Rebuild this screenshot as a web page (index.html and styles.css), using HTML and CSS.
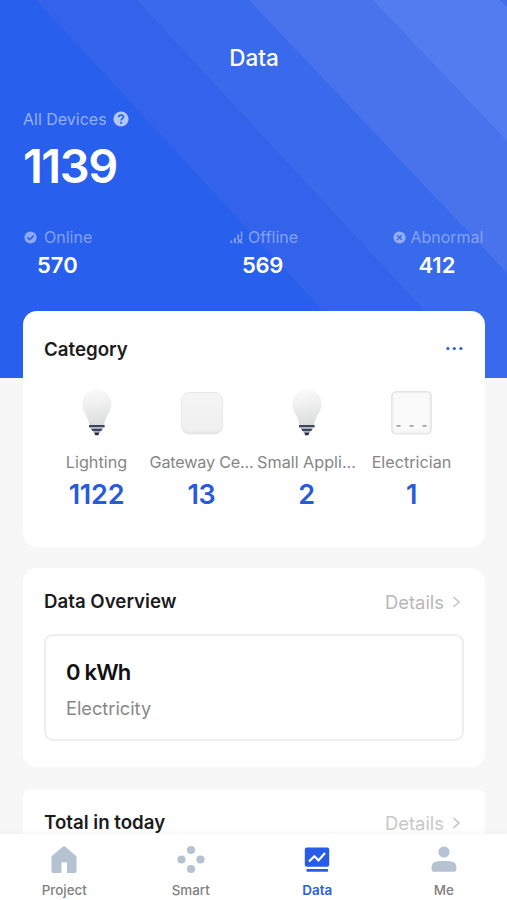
FILE: index.html
```html
<!DOCTYPE html>
<html lang="en">
<head>
<meta charset="utf-8">
<meta name="viewport" content="width=device-width, initial-scale=1">
<title>Data</title>
<link rel="stylesheet" href="styles.css">
</head>
<body>
<svg class="defs" width="0" height="0" aria-hidden="true">
  <defs>
    <linearGradient id="glass" x1="0" y1="0" x2="0.15" y2="1"><stop offset="0" stop-color="#fbfbfb"/><stop offset="0.45" stop-color="#f0f0f0"/><stop offset="1" stop-color="#dcdddd"/></linearGradient>
    <linearGradient id="plate" x1="0" y1="0" x2="0" y2="1"><stop offset="0" stop-color="#f5f5f5"/><stop offset="0.85" stop-color="#f0f0f0"/><stop offset="1" stop-color="#e4e4e4"/></linearGradient>
    <linearGradient id="face" x1="0" y1="0" x2="0" y2="1"><stop offset="0" stop-color="#f4f4f4"/><stop offset="1" stop-color="#f0f0f0"/></linearGradient>
    <symbol id="bulb" viewBox="0 0 48 52">
      <path d="M23.800 2.500C15 2.500 9.200 8.800 9.200 17c0 8.800 6.700 12.300 7.200 21.500h14.800c.5-9.200 7.200-12.700 7.200-21.500C38.400 8.800 32.600 2.500 23.800 2.500z" fill="url(#glass)"/>
      <path d="M16 38h15.600v2.400H16z" fill="#3c455b"/>
      <path d="M17.500 40.400h12.600v1.400H17.500z" fill="#b4bccb"/>
      <path d="M18.200 41.800h11.200l-1 2.200h-9.200z" fill="#3c455b"/>
      <path d="M20.200 44h7.200v1.500h-7.200z" fill="#aab3c4"/>
      <path d="M21.200 45.500h5.200l-1 2.700h-3.200z" fill="#242d41"/>
    </symbol>
  </defs>
</svg>
<div class="app">
  <main class="content">
    <header class="hero">
      <svg class="rays" viewBox="0 0 507 378" preserveAspectRatio="none" aria-hidden="true">
        <path d="M36 0H507V378H385z" fill="#3263ea"/>
        <path d="M137 0H507V378H487z" fill="#3a6aec"/>
        <path d="M249 0H507V273z" fill="#4972ed"/>
        <path d="M373 0H507V141z" fill="#537cf1"/>
        <path d="M500 0H507V7z" fill="#406fe9"/>
      </svg>
      <h1 class="title">Data</h1>
      <div class="all">All Devices
        <svg width="16" height="16" viewBox="0 0 16 16"><circle cx="8" cy="8" r="7.600" fill="#b2c7fb"/><path d="M5.700 6.300C5.700 3.300 10.400 3.300 10.400 6c0 1.700-2.300 1.700-2.300 3.500" fill="none" stroke="#2b61e9" stroke-width="1.700"/><circle cx="8.100" cy="11.800" r="1.100" fill="#2b61e9"/></svg>
      </div>
      <div class="total">1139</div>
      <div class="stats">
        <div class="stat online">
          <div class="stat-label"><svg width="13" height="13" viewBox="0 0 13 13"><circle cx="6.500" cy="6.500" r="6.100" fill="#8caaf7"/><path d="M3.500 6.400l2.200 2.200 4-4" fill="none" stroke="#2960ec" stroke-width="1.500"/></svg><span>Online</span></div>
          <div class="stat-num">570</div>
        </div>
        <div class="stat offline">
          <div class="stat-label"><svg width="13" height="13" viewBox="0 0 13 13"><path d="M.5 9.500h1.800V12H.5zM4 7h1.800v5H4zM7.300 3.500h1.800V7H7.300zM10.800.5h1.500v6h-1.500z" fill="#86a4f5"/><path d="M7.400 7.600l4.800 4.600M12.200 7.600l-4.800 4.600" stroke="#86a4f5" stroke-width="1.500"/></svg><span>Offline</span></div>
          <div class="stat-num">569</div>
        </div>
        <div class="stat abnormal">
          <div class="stat-label"><svg width="13" height="13" viewBox="0 0 13 13"><circle cx="6.500" cy="6.500" r="6.100" fill="#91adf6"/><path d="M4.200 4.200l4.600 4.600M8.800 4.200L4.200 8.800" stroke="#3a6aec" stroke-width="1.400"/></svg><span>Abnormal</span></div>
          <div class="stat-num">412</div>
        </div>
      </div>
    </header>

    <section class="card category">
      <div class="card-head">
        <h2>Category</h2>
        <svg width="18" height="6" viewBox="0 0 18 6"><g fill="#2b5fe0"><circle cx="1.900" cy="2.500" r="1.600"/><circle cx="8.300" cy="2.500" r="1.600"/><circle cx="14.900" cy="2.500" r="1.600"/></g></svg>
      </div>
      <div class="grid">
        <div class="item"><svg width="48" height="52"><use href="#bulb"/></svg><div class="name">Lighting</div><div class="num">1122</div></div>
        <div class="item"><svg width="48" height="52" viewBox="0 0 48 52"><rect x="3.500" y="5.500" width="41" height="41.500" rx="8" fill="url(#plate)" stroke="#e8e8e8"/><rect x="5.500" y="6.500" width="37" height="38" rx="7" fill="url(#face)"/></svg><div class="name tight">Gateway Ce...</div><div class="num">13</div></div>
        <div class="item"><svg width="48" height="52"><use href="#bulb"/></svg><div class="name">Small Appli...</div><div class="num">2</div></div>
        <div class="item"><svg width="48" height="52" viewBox="0 0 48 52"><rect x="3.900" y="4.800" width="39.200" height="42" rx="4" fill="#f7f7f7" stroke="#e5e5e5" stroke-width="1.600"/><rect x="6.500" y="6.500" width="34" height="36" rx="3" fill="#fafafa"/><path d="M8.500 38.800h4M21.500 38.800h4M34.500 38.800h4" stroke="#a3a3a3" stroke-width="1.700"/></svg><div class="name">Electrician</div><div class="num">1</div></div>
      </div>
    </section>

    <section class="card overview">
      <div class="card-head">
        <h2>Data Overview</h2>
        <a class="details">Details<svg width="9" height="12" viewBox="0 0 9 12"><path d="M1.500 1l5.500 5-5.500 5" fill="none" stroke="#c3c3c3" stroke-width="1.500"/></svg></a>
      </div>
      <div class="metric">
        <div class="value">0 kWh</div>
        <div class="label">Electricity</div>
      </div>
    </section>

    <section class="card today">
      <div class="card-head">
        <h2>Total in today</h2>
        <a class="details faint">Details<svg width="9" height="12" viewBox="0 0 9 12"><path d="M1.500 1l5.500 5-5.500 5" fill="none" stroke="#c3c3c3" stroke-width="1.500"/></svg></a>
      </div>
    </section>
  </main>

  <nav class="tabs">
    <div class="tab"><svg width="30" height="30" viewBox="0 0 30 30"><path d="M13.700 1.800Q15 .7 16.300 1.800L26.500 10.500Q27.500 11.400 27.500 12.700V26Q27.500 28 25.500 28H18V18.500Q18 17.300 16.800 17.300H13.700Q12.500 17.300 12.500 18.500V28H4.500Q2.500 28 2.500 26V12.700Q2.500 11.400 3.500 10.500z" fill="#b5c2d1"/></svg><span>Project</span></div>
    <div class="tab"><svg width="30" height="30" viewBox="0 0 30 30"><g fill="#b5c2d1"><circle cx="15" cy="5" r="4.100"/><circle cx="5.500" cy="14.500" r="4.100"/><circle cx="24.500" cy="14.500" r="4.100"/><circle cx="15" cy="24" r="4.100"/></g></svg><span>Smart</span></div>
    <div class="tab active"><svg width="30" height="30" viewBox="0 0 30 30"><rect x="2.800" y="2.500" width="24.400" height="19.200" rx="2" fill="#265ce8"/><path d="M7 16.500l5.300-5.300 4.200 4.200L23 8" fill="none" stroke="#fff" stroke-width="2.200"/><rect x="4.500" y="24" width="21.500" height="2.700" rx=".6" fill="#265ce8"/></svg><span>Data</span></div>
    <div class="tab"><svg width="30" height="30" viewBox="0 0 30 30"><g fill="#b5c2d1"><circle cx="15" cy="7" r="5.600"/><path d="M2.600 22.500C2.600 16.500 7 16 15 16s12.400.5 12.400 6.500v2q0 2.200-2.200 2.200H4.800q-2.200 0-2.200-2.200z"/></g></svg><span>Me</span></div>
  </nav>
</div>
</body>
</html>
```
FILE: styles.css
```css
* { box-sizing: border-box; }
body { margin: 0; background: #f7f7f7; font-family: Inter, "Liberation Sans", sans-serif; }
.defs { position: absolute; }
.app { display: flex; flex-direction: column; width: 507px; height: 900px; overflow: hidden; background: #f7f7f7; }
.content { flex: 1; min-height: 0; overflow: hidden; }
svg { display: block; flex: none; }
h1, h2 { margin: 0; }

.hero { position: relative; height: 378px; padding: 42px 22px 0 23px; background: #285fec; color: #fff; }
.rays { position: absolute; top: 0; left: 0; width: 507px; height: 378px; }
.hero > :not(.rays) { position: relative; }
.title { font-size: 22.500px; line-height: 32px; font-weight: 500; text-align: center; }
.all { display: flex; align-items: center; gap: 6px; margin-top: 35px; height: 20px; font-size: 16px; line-height: 20px; color: #94b0f8; }
.total { margin-top: 12px; font-size: 47px; line-height: 50px; font-weight: 600; letter-spacing: -1.500px; }
.stats { display: flex; margin-top: 36px; padding-left: 1px; }
.stat { width: 207px; }
.stat.offline { width: 164px; }
.stat.abnormal { width: 92px; }
.stat-label { display: flex; align-items: center; gap: 4px; height: 20px; font-size: 16px; color: #84a2f5; white-space: nowrap; }
.online .stat-label { gap: 7px; }
.offline .stat-label { gap: 5px; }
.stat-num { margin-top: 6px; padding-left: 13px; font-size: 22px; line-height: 24px; font-weight: 600; }
.offline .stat-num { padding-left: 12px; letter-spacing: -.4px; }
.abnormal .stat-num { padding-left: 25px; }

.card { position: relative; margin: 21px 22px 0 23px; padding: 0 21px; border-radius: 14px; background: #fff; }
.card-head { display: flex; align-items: center; justify-content: space-between; height: 24px; }
h2 { font-size: 18.700px; line-height: 24px; font-weight: 600; color: #1c1c1e; }
.category { margin-top: -67px; height: 236px; padding-top: 26px; }
.category h2 { padding-top: 1px; }
.grid { display: grid; grid-template-columns: repeat(4, 105px); margin-top: 26px; }
.item { display: flex; flex-direction: column; align-items: center; }
.name { margin-top: 13px; font-size: 16.200px; line-height: 20px; color: #868686; white-space: nowrap; }
.name.tight { letter-spacing: -.2px; }
.num { margin-top: 10px; font-size: 27px; line-height: 26px; font-weight: 600; color: #285adc; letter-spacing: -.2px; }

.overview { height: 199px; padding-top: 22px; }
.details { display: flex; align-items: center; gap: 8px; margin-right: 3px; font-size: 18.400px; line-height: 22px; color: #b8b8b8; }
.metric { margin-top: 20px; height: 107px; padding: 23px 20px; border: 2px solid #ededed; border-radius: 9px; }
.value { font-size: 22px; line-height: 26px; font-weight: 600; color: #111; letter-spacing: -.8px; }
.label { margin-top: 12px; font-size: 18.200px; line-height: 22px; color: #888; }
.today { margin-top: 23px; height: 200px; padding-top: 21px; border-radius: 6px; }
.faint { color: #c8c8c8; }

.tabs { position: relative; display: grid; grid-template-columns: repeat(4, 1fr); height: 66px; padding: 11px 0 0 1px; background: #fff; box-shadow: 0 -2px 5px rgba(0,0,0,.03); }
.tab { display: flex; flex-direction: column; align-items: center; font-size: 13.400px; line-height: 18px; font-weight: 500; color: #808080; }
.tab span { margin-top: 6px; }
.tab.active { color: #285ee8; font-weight: 600; }
```
